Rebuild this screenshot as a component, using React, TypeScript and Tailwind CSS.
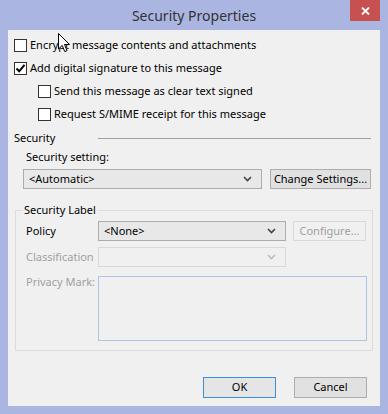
import { useState } from 'react'

const font = { fontFamily: '"Noto Sans", "Open Sans", sans-serif' }

function Check({ checked, onChange }: { checked: boolean; onChange: () => void }) {
  return (
    <button
      onClick={onChange}
      className="w-[13px] h-[13px] border border-[#333] bg-white flex items-center justify-center shrink-0"
    >
      {checked && (
        <svg width="11" height="11" viewBox="0 0 11 11">
          <path d="M1.5 5.5 L4.2 8.3 L9.5 1.8" fill="none" stroke="#000" strokeWidth="2" />
        </svg>
      )}
    </button>
  )
}

function Chevron({ color = '#444' }: { color?: string }) {
  return (
    <svg width="9" height="6" viewBox="0 0 9 6">
      <path d="M1 1 L4.5 4.5 L8 1" fill="none" stroke={color} strokeWidth="1.6" />
    </svg>
  )
}

function Select({ value, width, disabled }: { value: string; width: string; disabled?: boolean }) {
  return (
    <div
      className={`${width} h-[20px] flex items-center justify-between pl-[5px] pr-[9px] border ${
        disabled ? 'border-[#d9d9d9] bg-[#f0f0f0]' : 'border-[#acacac] bg-[#e8e8e8]'
      }`}
    >
      <span>{value}</span>
      <Chevron color={disabled ? '#bcbcbc' : '#444'} />
    </div>
  )
}

export default function App() {
  const [encrypt, setEncrypt] = useState(false)
  const [sign, setSign] = useState(true)
  const [clearText, setClearText] = useState(false)
  const [receipt, setReceipt] = useState(false)

  return (
    <div
      className="relative w-[388px] h-[414px] bg-[#aab5e2] pt-[30px] px-[8px] pb-[8px] text-[11px] text-black whitespace-nowrap"
      style={font}
    >
      {/* Title bar */}
      <div className="absolute top-0 left-0 w-full h-[30px] flex items-center justify-center text-[14px] text-[#333]">
        Security Properties
      </div>
      <div className="absolute top-0 right-[8px] w-[30px] h-[21px] bg-[#c75050] flex items-center justify-center">
        <svg width="9" height="8" viewBox="0 0 9 8">
          <path d="M1 0.5 L8 7.5 M8 0.5 L1 7.5" stroke="#fff" strokeWidth="1.8" />
        </svg>
      </div>

      {/* Client area */}
      <div className="w-full h-full bg-[#f0f0f0] pt-[4px]">
        <div className="flex items-center h-[23px] pl-[6px] gap-[3px]">
          <Check checked={encrypt} onChange={() => setEncrypt(!encrypt)} />
          <span>Encrypt message contents and attachments</span>
        </div>
        <div className="flex items-center h-[23px] pl-[6px] gap-[3px]">
          <Check checked={sign} onChange={() => setSign(!sign)} />
          <span>Add digital signature to this message</span>
        </div>
        <div className="flex items-center h-[23px] pl-[30px] gap-[3px]">
          <Check checked={clearText} onChange={() => setClearText(!clearText)} />
          <span>Send this message as clear text signed</span>
        </div>
        <div className="flex items-center h-[23px] pl-[30px] gap-[3px]">
          <Check checked={receipt} onChange={() => setReceipt(!receipt)} />
          <span>Request S/MIME receipt for this message</span>
        </div>

        {/* Security */}
        <div className="flex items-center h-[20px] mt-[2px] pl-[6px] pr-[9px]">
          <span className="w-[84px]">Security</span>
          <div className="flex-1 border-t border-[#a0a0a0]" />
        </div>
        <div className="flex items-center h-[18px] pl-[18px]">Security setting:</div>
        <div className="flex items-center mt-[3px] pl-[15px] gap-[8px]">
          <Select value="<Automatic>" width="w-[239px]" />
          <button className="w-[101px] h-[20px] border border-[#adadad] bg-[#e1e1e1]">
            Change Settings...
          </button>
        </div>

        {/* Security Label */}
        <fieldset className="mt-[13px] ml-[7px] w-[358px] border border-[#dcdcdc] pb-[9px]">
          <legend className="ml-[7px] px-[1px] leading-[16px]">Security Label</legend>
          <div className="grid grid-cols-[72px_auto] items-center pl-[10px] pt-[3px] gap-y-[6px]">
            <span>Policy</span>
            <div className="flex items-center gap-[7px]">
              <Select value="<None>" width="w-[188px]" />
              <button className="w-[73px] h-[20px] border border-[#d9d9d9] bg-[#f0f0f0] text-[#a0a0a0]">
                Configure...
              </button>
            </div>
            <span className="text-[#a0a0a0]">Classification</span>
            <Select value="" width="w-[188px]" disabled />
            <span className="text-[#a0a0a0] self-start mt-[1px]">Privacy Mark:</span>
            <textarea
              disabled
              className="w-[269px] h-[65px] mt-[3px] border border-[#abc7e6] bg-[#f0f0f0] resize-none"
            />
          </div>
        </fieldset>

        {/* Buttons */}
        <div className="flex justify-end gap-[18px] mt-[26px] pr-[13px]">
          <button className="w-[73px] h-[21px] border border-[#3c90d8] bg-[#e5e5e5]">OK</button>
          <button className="w-[73px] h-[21px] border border-[#adadad] bg-[#e1e1e1]">Cancel</button>
        </div>
      </div>

      {/* Mouse pointer */}
      <svg className="absolute left-[58px] top-[33px]" width="13" height="20" viewBox="0 0 13 20">
        <path
          d="M0.5 0.5 L0.5 16 L4.2 12.4 L6.8 18.6 L9 17.6 L6.5 11.5 L11.5 11.5 Z"
          fill="#fff"
          stroke="#000"
          strokeWidth="1"
        />
      </svg>
    </div>
  )
}
